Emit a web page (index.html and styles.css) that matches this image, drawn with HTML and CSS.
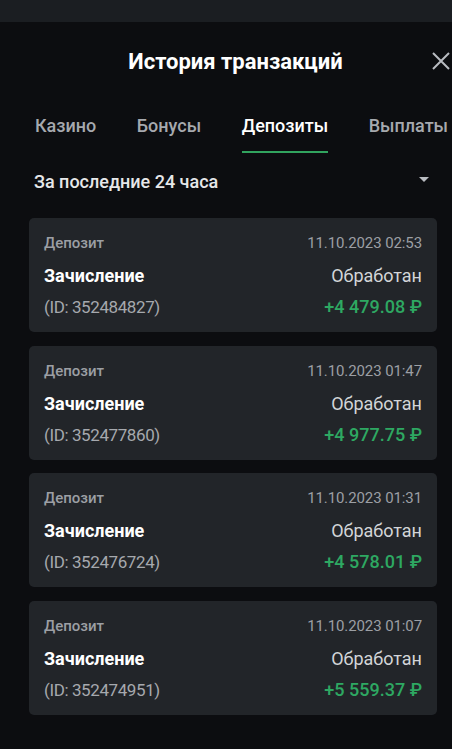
FILE: index.html
```html
<!DOCTYPE html>
<html lang="ru">
<head>
  <meta charset="UTF-8">
  <meta name="viewport" content="width=device-width, initial-scale=1.0">
  <title>История транзакций</title>
  <link rel="stylesheet" href="styles.css">
</head>
<body>
  <div class="topbar"></div>
  <div class="panel">
    <div class="panel-header">
      <h2>История транзакций</h2>
      <button class="close" aria-label="Закрыть">
        <svg width="18" height="18" viewBox="0 0 18 18"><path d="M1 1L17 17M17 1L1 17" stroke="#b9bcc1" stroke-width="2" fill="none"/></svg>
      </button>
    </div>
    <div class="tabs">
      <span class="tab">Казино</span>
      <span class="tab">Бонусы</span>
      <span class="tab active">Депозиты</span>
      <span class="tab">Выплаты</span>
    </div>
    <div class="filter">
      <span>За последние 24 часа</span>
      <span class="caret"></span>
    </div>
    <div class="list" id="list"></div>
  </div>

  <script>
    const items = [
      { date: "11.10.2023 02:53", id: "352484827", amount: "+4 479.08 ₽" },
      { date: "11.10.2023 01:47", id: "352477860", amount: "+4 977.75 ₽" },
      { date: "11.10.2023 01:31", id: "352476724", amount: "+4 578.01 ₽" },
      { date: "11.10.2023 01:07", id: "352474951", amount: "+5 559.37 ₽" }
    ];

    const list = document.getElementById("list");
    items.forEach(item => {
      const card = document.createElement("div");
      card.className = "card";
      card.innerHTML = `
        <div class="row row-top"><span class="type">Депозит</span><span class="date">${item.date}</span></div>
        <div class="row row-mid"><span class="title">Зачисление</span><span class="status">Обработан</span></div>
        <div class="row row-bot"><span class="tid">(ID: ${item.id})</span><span class="amount">${item.amount}</span></div>
      `;
      list.appendChild(card);
    });
  </script>
</body>
</html>
```

FILE: styles.css
```css
body {
  margin: 0;
  background-color: #0c0d10;
  font-family: Roboto, "Liberation Sans", sans-serif;
  color: #fff;
}

.topbar {
  height: 22px;
  background-color: #1b1e22;
}

.panel {
  padding: 0 0 0 29px;
}

.panel-header {
  height: 78px;
  display: flex;
  align-items: center;
  justify-content: center;
  position: relative;
  margin-left: -29px;
}

.panel-header h2 {
  margin: 0;
  font-size: 22px;
  font-weight: 700;
  color: #fff;
  padding-left: 19px;
}

.close {
  position: absolute;
  right: 2px;
  top: 30px;
  background: none;
  border: none;
  padding: 0;
  width: 18px;
  height: 18px;
  cursor: pointer;
}

.tabs {
  display: flex;
  gap: 40.5px;
  padding-left: 6px;
  height: 53px;
  white-space: nowrap;
}

.tab {
  font-size: 18px;
  font-weight: 500;
  color: #a6a9ae;
  padding-top: 15px;
  box-sizing: border-box;
  height: 53px;
}

.tab.active {
  color: #fff;
  border-bottom: 2px solid #31a35e;
}

.filter {
  display: flex;
  justify-content: space-between;
  align-items: center;
  height: 56px;
  padding: 0 23px 0 5px;
  font-size: 18px;
  font-weight: 500;
  color: #e6e7e9;
}

.caret {
  width: 0;
  height: 0;
  margin-top: -3px;
  border-left: 5px solid transparent;
  border-right: 5px solid transparent;
  border-top: 5px solid #b9bcc1;
}

.list {
  display: flex;
  flex-direction: column;
  gap: 13.67px;
  width: 408px;
  padding-top: 9px;
}

.card {
  background-color: #222529;
  border-radius: 5px;
  height: 114px;
  padding: 14px 15px 0 15px;
  box-sizing: border-box;
}

.row {
  display: flex;
  justify-content: space-between;
  align-items: baseline;
  line-height: 22px;
}

.row-top {
  font-size: 15px;
  color: #9c9fa4;
}

.type {
  font-weight: 500;
}

.date {
  letter-spacing: -0.1px;
}

.row-mid {
  font-size: 18px;
  margin-top: 11px;
}

.title {
  font-weight: 700;
  color: #fff;
}

.status {
  color: #d3d5d8;
}

.row-bot {
  font-size: 18px;
  margin-top: 9px;
}

.tid {
  color: #a6a9ae;
  font-size: 17px;
  letter-spacing: -0.4px;
}

.amount {
  color: #2ea862;
  font-weight: 500;
}
```
